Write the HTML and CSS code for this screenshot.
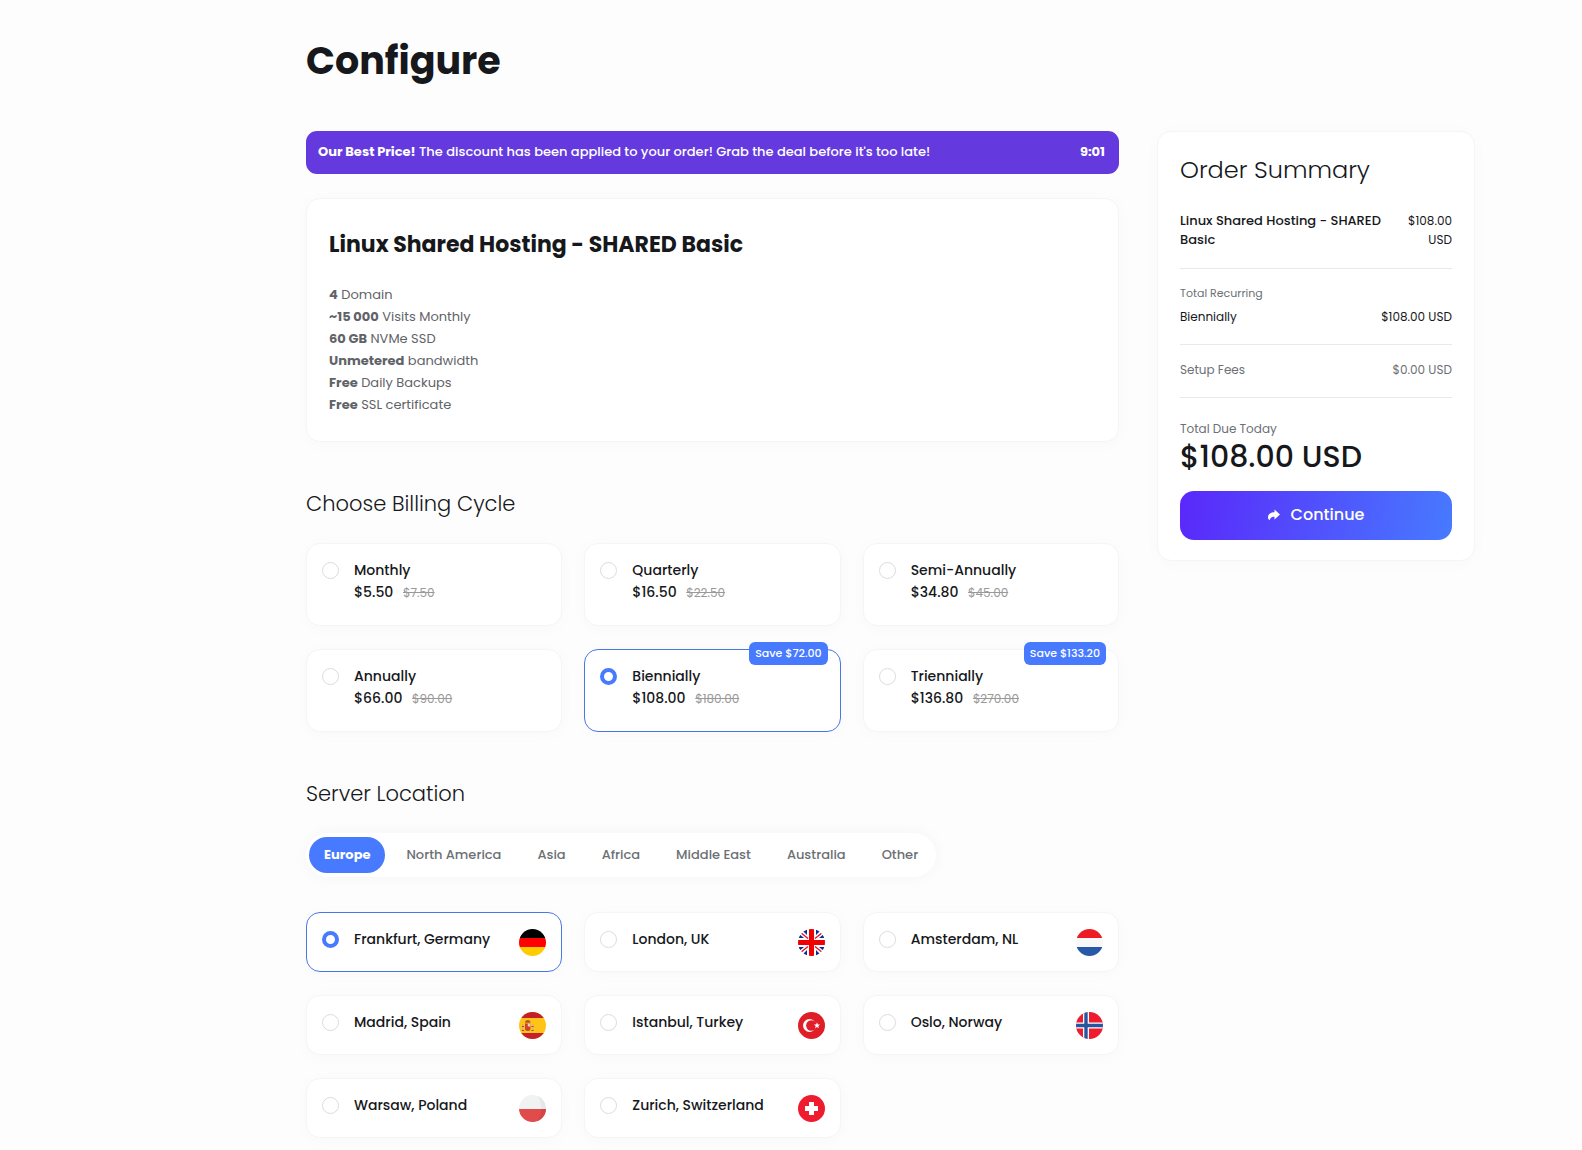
FILE: index.html
```
<!doctype html>
<html lang="en">

<head>
	<meta charset="utf-8">
	<meta name="viewport" content="width=device-width, initial-scale=1">
	<title>Configure</title>
	<link rel="stylesheet" href="styles.css">
</head>

<body>
	<form class="page">
		<h1>Configure</h1>
		<div class="columns">
			<main>
				<div class="banner">
					<p><strong>Our Best Price!</strong> The discount has been applied to your order! Grab the deal before it's too late!</p>
					<strong class="timer">9:01</strong>
				</div>

				<section class="card product">
					<h2>Linux Shared Hosting - SHARED Basic</h2>
					<ul>
						<li><b>4</b> Domain</li>
						<li><b>~15 000</b> Visits Monthly</li>
						<li><b>60 GB</b> NVMe SSD</li>
						<li><b>Unmetered</b> bandwidth</li>
						<li><b>Free</b> Daily Backups</li>
						<li><b>Free</b> SSL certificate</li>
					</ul>
				</section>

				<section>
					<h3>Choose Billing Cycle</h3>
					<div class="options">
						<label class="card option cycle">
							<input type="radio" name="cycle">
							<span class="text">Monthly<span class="price">$5.50 <s>$7.50</s></span></span>
						</label>
						<label class="card option cycle">
							<input type="radio" name="cycle">
							<span class="text">Quarterly<span class="price">$16.50 <s>$22.50</s></span></span>
						</label>
						<label class="card option cycle">
							<input type="radio" name="cycle">
							<span class="text">Semi-Annually<span class="price">$34.80 <s>$45.00</s></span></span>
						</label>
						<label class="card option cycle">
							<input type="radio" name="cycle">
							<span class="text">Annually<span class="price">$66.00 <s>$90.00</s></span></span>
						</label>
						<label class="card option cycle">
							<input type="radio" name="cycle" checked>
							<span class="text">Biennially<span class="price">$108.00 <s>$180.00</s></span></span>
							<span class="save">Save $72.00</span>
						</label>
						<label class="card option cycle">
							<input type="radio" name="cycle">
							<span class="text">Triennially<span class="price">$136.80 <s>$270.00</s></span></span>
							<span class="save">Save $133.20</span>
						</label>
					</div>
				</section>

				<section>
					<h3>Server Location</h3>
					<div class="tabs">
						<button type="button" class="active">Europe</button>
						<button type="button">North America</button>
						<button type="button">Asia</button>
						<button type="button">Africa</button>
						<button type="button">Middle East</button>
						<button type="button">Australia</button>
						<button type="button">Other</button>
					</div>
					<div class="options">
						<label class="card option">
							<input type="radio" name="location" checked>
							<span class="text">Frankfurt, Germany</span>
							<svg class="flag" viewBox="0 0 27 27">
								<rect width="27" height="9" fill="#000"/>
								<rect y="9" width="27" height="9" fill="#f00"/>
								<rect y="18" width="27" height="9" fill="#fc0"/>
							</svg>
						</label>
						<label class="card option">
							<input type="radio" name="location">
							<span class="text">London, UK</span>
							<svg class="flag" viewBox="0 0 27 27">
								<rect width="27" height="27" fill="#fff"/>
								<path d="M9 0v6L3 0zM18 0v6l6-6zM9 27v-6l-6 6zM18 27v-6l6 6zM0 4l6 5H0zM27 4l-6 5h6zM0 23l6-5H0zM27 23l-6-5h6z" fill="#0a2f8c"/>
								<path d="M2 3l8 6.500M25 3l-8 6.500M2 24l8-6.500M25 24l-8-6.500" stroke="#e8112d" stroke-width="1.400"/>
								<path d="M13.500 0v27M0 13.500h27" stroke="#f00000" stroke-width="5"/>
							</svg>
						</label>
						<label class="card option">
							<input type="radio" name="location">
							<span class="text">Amsterdam, NL</span>
							<svg class="flag" viewBox="0 0 27 27">
								<rect width="27" height="9" fill="#ed1c24"/>
								<rect y="9" width="27" height="9" fill="#f8f8f8"/>
								<rect y="18" width="27" height="9" fill="#2859a8"/>
							</svg>
						</label>
						<label class="card option">
							<input type="radio" name="location">
							<span class="text">Madrid, Spain</span>
							<svg class="flag" viewBox="0 0 27 27">
								<rect width="27" height="27" fill="#ffc417"/>
								<rect width="27" height="6" fill="#c4202b"/>
								<rect y="21" width="27" height="6" fill="#c4202b"/>
								<path d="M3.500 12v6M14 12v6" stroke="#d9a59a" stroke-width="1"/>
								<path d="M3 14.500h2M12.500 14.500h2M3 18.500h2M12.500 18.500h2" stroke="#a8402b" stroke-width="1"/>
								<path d="M6 11.500h5.500v5a2.750 2.500 0 0 1-5.500 0z" fill="#c8442f"/>
								<path d="M8.800 11.500h2.700v3h-2.700z" fill="#f0c9bd"/>
								<path d="M6 10.800c0-2 1.200-2.800 2.800-2.800s2.700.8 2.700 2.800z" fill="#b3542a"/>
							</svg>
						</label>
						<label class="card option">
							<input type="radio" name="location">
							<span class="text">Istanbul, Turkey</span>
							<svg class="flag" viewBox="0 0 27 27">
								<rect width="27" height="27" fill="#e01e27"/>
								<circle cx="11.500" cy="13.500" r="6.500" fill="#fff"/>
								<circle cx="13.300" cy="13.500" r="5.200" fill="#e01e27"/>
								<path d="M19 10.300l.8 2.200 2.300.1-1.800 1.400.6 2.300-1.900-1.300-1.900 1.300.6-2.300-1.800-1.400 2.300-.1z" fill="#fff"/>
							</svg>
						</label>
						<label class="card option">
							<input type="radio" name="location">
							<span class="text">Oslo, Norway</span>
							<svg class="flag" viewBox="0 0 27 27">
								<rect width="27" height="27" fill="#ed1c2e"/>
								<path d="M10 0v27M0 13.500h27" stroke="#fff" stroke-width="6"/>
								<path d="M10 0v27M0 13.500h27" stroke="#27569f" stroke-width="3.400"/>
							</svg>
						</label>
						<label class="card option">
							<input type="radio" name="location">
							<span class="text">Warsaw, Poland</span>
							<svg class="flag" viewBox="0 0 27 27">
								<rect width="27" height="14" fill="#f1f2f2"/>
								<path d="M18 0h9v14h-5q0-9-4-14z" fill="#e6e7e8"/>
								<rect y="14" width="27" height="13" fill="#e04b4b"/>
								<path d="M22 14h5v13h-9q4-5 4-13z" fill="#d64545"/>
							</svg>
						</label>
						<label class="card option">
							<input type="radio" name="location">
							<span class="text">Zurich, Switzerland</span>
							<svg class="flag" viewBox="0 0 27 27">
								<rect width="27" height="27" fill="#ee1c2e"/>
								<path d="M13.500 7v13M7 13.500h13" stroke="#fff" stroke-width="5"/>
							</svg>
						</label>
					</div>
				</section>
			</main>

			<aside class="card summary">
				<h2>Order Summary</h2>
				<div class="row item">
					<strong>Linux Shared Hosting - SHARED Basic</strong>
					<span class="amount">$108.00 USD</span>
				</div>
				<div class="block">
					<p class="muted small">Total Recurring</p>
					<div class="row"><span>Biennially</span><span>$108.00 USD</span></div>
				</div>
				<div class="block">
					<div class="row muted"><span>Setup Fees</span><span>$0.00 USD</span></div>
				</div>
				<div class="total">
					<p class="muted">Total Due Today</p>
					<p class="sum">$108.00 USD</p>
				</div>
				<button type="submit" class="continue">
					<svg viewBox="0 0 12 12" width="12" height="12"><path d="M6.500.5l5.500 5-5.500 5V7.800C4 7.800 2.300 8.600 1.600 11.200.2 10.300 0 9 0 8.200 0 5.300 2.600 3.200 6.500 3.200z" fill="currentColor"/></svg>
					Continue
				</button>
			</aside>
		</div>
	</form>
</body>

</html>
```
FILE: styles.css
```
* {
	box-sizing: border-box;
	margin: 0;
	padding: 0;
}

body {
	background: #fdfdfd;
	color: #16181b;
	font-family: Poppins, Inter, sans-serif;
	font-size: 14px;
	line-height: 22px;
}

button,
input {
	font: inherit;
}

.page {
	padding: 38px 107px 12px 306px;
}

h1 {
	margin-bottom: 47px;
	font-size: 38px;
	font-weight: 700;
	line-height: 46px;
}

.columns {
	display: grid;
	grid-template-columns: minmax(0, 1fr) 318px;
	gap: 38px;
	align-items: start;
}

.banner {
	display: flex;
	justify-content: space-between;
	padding: 10px 14px 11px 12px;
	border-radius: 11px;
	background: #643adf;
	color: #fff;
	font-size: 13px;
	font-weight: 500;
}

.banner strong {
	font-weight: 700;
}

.card {
	border: 1px solid #f5f5f5;
	border-radius: 14px;
	background: #fff;
	box-shadow: 0 2px 16px rgba(0, 0, 0, 0.025);
}

.product {
	margin-top: 24px;
	padding: 26px 22px 25px;
}

.product h2 {
	margin-bottom: 19px;
	font-size: 22px;
	font-weight: 700;
	line-height: 40px;
}

.product ul {
	list-style: none;
	color: #5f6368;
	font-size: 13px;
}

h3 {
	margin: 47px 0 24px;
	font-size: 21px;
	font-weight: 300;
	line-height: 30px;
}

.options {
	display: grid;
	grid-template-columns: repeat(3, minmax(0, 1fr));
	gap: 23px 22px;
}

.option {
	position: relative;
	display: flex;
	align-items: flex-start;
	gap: 15px;
	min-height: 60px;
	padding: 15px;
	font-weight: 500;
}

.cycle {
	min-height: 83px;
}

.option:has(:checked) {
	border-color: #4877e8;
}

.option input {
	appearance: none;
	flex: none;
	width: 17px;
	height: 17px;
	margin-top: 3px;
	border: 1px solid #dcdcdc;
	border-radius: 50%;
	background: #fff;
}

.option input:checked {
	border: 4px solid #477aff;
}

.text {
	flex: 1;
}

.price {
	display: block;
}

.price s {
	margin-left: 6px;
	color: #999;
	font-size: 12px;
	font-weight: 400;
}

.save {
	position: absolute;
	top: -8px;
	right: 12px;
	padding: 0 6px;
	border-radius: 6px;
	background: #477aff;
	color: #fff;
	font-size: 11px;
	line-height: 23px;
}

.flag {
	flex: none;
	width: 27px;
	height: 27px;
	margin-top: 1px;
	border-radius: 50%;
}

.tabs {
	display: inline-flex;
	gap: 6px;
	margin-bottom: 35px;
	padding: 4px 3px;
	border-radius: 22px;
	background: #fff;
	box-shadow: 0 0 16px rgba(0, 0, 0, 0.04);
	vertical-align: top;
}

.tabs button {
	padding: 0 15px;
	border: 0;
	border-radius: 18px;
	background: none;
	color: #6c7075;
	font-size: 13px;
	font-weight: 500;
	line-height: 36px;
}

.tabs .active {
	background: #477aff;
	color: #fff;
	font-weight: 700;
}

.summary {
	padding: 20px 22px;
	font-size: 12px;
	line-height: 23px;
}

.summary h2 {
	margin-bottom: 23px;
	font-size: 24px;
	font-weight: 300;
	line-height: 36px;
}

.row {
	display: flex;
	justify-content: space-between;
}

.item {
	padding-bottom: 19px;
	line-height: 19px;
}

.item strong {
	flex: 1;
	font-size: 13px;
	font-weight: 500;
}

.amount {
	width: 22%;
	text-align: right;
}

.block {
	padding: 13px 0 16px;
	border-top: 1px solid #e9e9e9;
}

.muted {
	color: #6c7075;
}

.small {
	font-size: 11px;
}

.total {
	padding: 19px 0 18px;
	border-top: 1px solid #e9e9e9;
}

.sum {
	font-size: 30px;
	font-weight: 500;
	line-height: 33px;
}

.continue {
	display: flex;
	align-items: center;
	justify-content: center;
	gap: 11px;
	width: 100%;
	height: 49px;
	padding-bottom: 2px;
	border: 0;
	border-radius: 14px;
	background: linear-gradient(100deg, #5a28fa, #477aff);
	color: #fff;
	font-size: 16px;
	font-weight: 500;
}
```
